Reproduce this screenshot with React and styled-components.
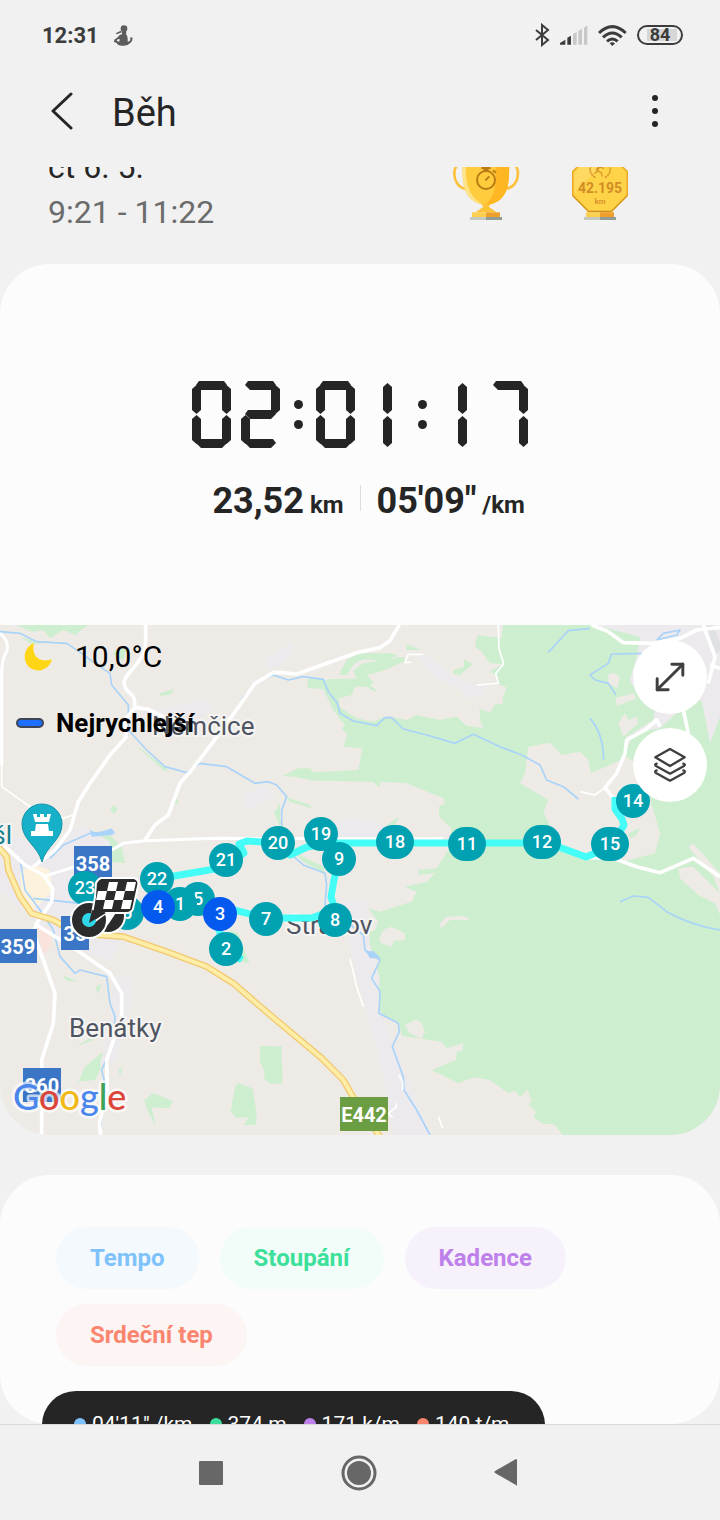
import React, { useState } from "react";
import styled, { createGlobalStyle } from "styled-components";
import { MoveDiagonal } from "lucide-react";

const colors = {
  background: "#f1f1f1",
  card: "#fcfcfc",
  text: "#252525",
  muted: "#6b6b6b",
  status: "#3c3c3c",
  nav: "#676767",
  blue: "#7fc2fb",
  green: "#3ce09a",
  purple: "#be80ea",
  coral: "#fb866f",
  pin: "#00a1b1",
  fastest: "#0459ee",
  route: "#43fdf6",
  land: "#eeebe6",
  forest: "#cdeecf",
  urban: "#edeaee",
  water: "#a9d3f8",
};

const GlobalStyle = createGlobalStyle`
  * {
    box-sizing: border-box;
  }

  body {
    margin: 0;
    background-color: ${colors.background};
    color: ${colors.text};
    font-family: Roboto, "Liberation Sans", sans-serif;
  }

  button {
    border: none;
    padding: 0;
    background: none;
    font-family: inherit;
    color: inherit;
    cursor: pointer;
  }

  svg {
    display: block;
  }
`;

const Screen = styled.div`
  display: flex;
  flex-direction: column;
  height: 100vh;
`;

const StatusBar = styled.div`
  display: flex;
  align-items: center;
  flex-shrink: 0;
  height: 70px;
  padding: 0 37px 0 42px;
  color: ${colors.status};

  .clock {
    font-size: 22px;
    font-weight: 700;
    margin-right: 15px;
  }

  .icons {
    display: flex;
    align-items: center;
    gap: 10px;
    margin-left: auto;
  }
`;

const Battery = styled.span`
  width: 46px;
  height: 20px;
  border: 2px solid ${colors.status};
  border-radius: 10px;
  font-size: 18px;
  line-height: 16px;
  font-weight: 700;
  text-align: center;
  background: linear-gradient(#d6d6d6, #d6d6d6) 8px 2px / 30px 12px no-repeat;
`;

const AppBar = styled.header`
  display: flex;
  align-items: center;
  flex-shrink: 0;
  height: 97px;
  padding: 0 45px 15px 42px;

  h1 {
    flex: 1;
    margin: 4px 0 0 30px;
    font-size: 38px;
    line-height: 44px;
    font-weight: 400;
  }
`;

const IconButton = styled.button`
  display: grid;
  place-items: center;
  width: 40px;
  height: 48px;
`;

const Content = styled.main`
  flex: 1;
  min-height: 0;
  overflow-y: auto;
  scrollbar-width: none;
`;

const Summary = styled.section`
  display: flex;
  justify-content: space-between;
  align-items: flex-start;
  margin-top: -22px;
  padding: 0 92px 29px 48px;
  font-size: 32px;
  line-height: 45px;

  p {
    margin: 0;
  }

  .time {
    color: ${colors.muted};
  }
`;

const Awards = styled.div`
  display: flex;
  gap: 50px;
`;

const Card = styled.section`
  background-color: ${colors.card};
  border-radius: ${(props) => (props.$top ? "50px 50px 0 0" : "50px")};
  padding: ${(props) => props.$padding};
`;

const Timer = styled.div`
  display: flex;
  justify-content: center;
`;

const Pair = styled.div`
  display: flex;
  gap: 10px;
`;

const Digit = styled.div`
  display: grid;
  width: 39px;
  height: 67px;
  padding-left: ${(props) => (props.$narrow ? "6px" : "0")};
`;

const Segment = styled.span`
  grid-area: 1 / 1;
  width: 9px;
  height: ${(props) => (props.$long ? "31px" : "29px")};
  margin: ${(props) => (props.$long ? "2px 0 1px" : "4px 0")};
  background-color: ${colors.text};
  justify-self: ${(props) => props.$x};
  align-self: ${(props) => props.$y};
  clip-path: polygon(
    50% 0,
    100% 4px,
    100% calc(100% - 4px),
    50% 100%,
    0 calc(100% - 4px),
    0 4px
  );

  &.flat {
    width: 31px;
    height: 9px;
    margin: 0;
    clip-path: polygon(
      3px 0,
      28px 0,
      100% 4px,
      26px 100%,
      5px 100%,
      0 4px
    );
  }
`;

const Colon = styled.div`
  display: flex;
  flex-direction: column;
  align-items: center;
  gap: 11px;
  width: 36px;
  padding-top: 19px;

  span {
    width: 9px;
    height: 9px;
    border-radius: 50%;
    background-color: ${colors.text};
  }
`;

const Stats = styled.div`
  display: grid;
  grid-template-columns: 1fr 1px 1fr;
  column-gap: 16px;
  align-items: center;
  margin-top: 32px;
  font-size: 36px;
  line-height: 42px;
  font-weight: 700;

  .distance {
    text-align: right;
  }

  .rule {
    height: 26px;
    margin-bottom: 6px;
    background-color: #dddddd;
  }

  small {
    font-size: 24px;
    line-height: 24px;
  }
`;

const MapPanel = styled.section`
  position: relative;
  overflow: hidden;
  border-radius: 0 0 50px 50px;
  background-color: ${colors.land};
  margin-bottom: 40px;

  svg.map {
    width: 100%;
    height: auto;
  }
`;

const MapInfo = styled.div`
  position: absolute;
  top: 12px;
  left: 16px;
  display: grid;
  row-gap: 30px;
  color: #000;

  .row {
    display: flex;
    align-items: center;
  }

  .weather {
    gap: 22px;
    padding-left: 8px;
    font-size: 30px;
    line-height: 40px;
  }

  .legend {
    gap: 12px;
    font-size: 26px;
    line-height: 32px;
    font-weight: 700;
  }

  .swatch {
    width: 28px;
    height: 10px;
    border: 2px solid #3d4656;
    border-radius: 5px;
    background-color: #1f6fff;
  }
`;

const MapTools = styled.div`
  position: absolute;
  top: 15px;
  right: 13px;
  display: grid;
  gap: 14px;
`;

const RoundButton = styled.button`
  display: grid;
  place-items: center;
  width: 74px;
  height: 74px;
  border-radius: 50%;
  background-color: #fff;
  color: #3f3f3f;
`;

const Chips = styled.div`
  display: flex;
  flex-wrap: wrap;
  gap: 15px 21px;
`;

const Chip = styled.button`
  height: 62px;
  padding: 0 34px;
  border-radius: 31px;
  font-size: 24px;
  font-weight: 700;
  color: ${(props) => props.$color};
  background-color: ${(props) => props.$fill};
`;

const Readout = styled.div`
  display: flex;
  gap: 17px;
  width: fit-content;
  margin: -33px 0 40px 42px;
  padding: 20px 35px 24px 32px;
  border-radius: 34px;
  background-color: ${colors.text};
  color: #fff;
  font-size: 21px;
  line-height: 26px;
  white-space: nowrap;
`;

const Reading = styled.span`
  display: flex;
  align-items: center;
  gap: 6px;

  &::before {
    content: "";
    width: 12px;
    height: 12px;
    border-radius: 50%;
    background-color: ${(props) => props.$color};
  }
`;

const NavBar = styled.nav`
  display: flex;
  justify-content: center;
  flex-shrink: 0;
  height: 96px;
  padding-right: 2px;
  border-top: 1px solid #d9d9d9;
  color: ${colors.nav};

  button {
    display: grid;
    place-items: center;
    width: 148px;
  }
`;

// which segments are lit, a = top and then clockwise, g = middle
const lit = {
  0: "abcdef",
  1: "bc",
  2: "abdeg",
  3: "abcdg",
  4: "bcfg",
  5: "acdfg",
  6: "acdefg",
  7: "abc",
  8: "abcdefg",
  9: "abcdfg",
};

const place = {
  a: ["center", "start"],
  b: ["end", "start"],
  c: ["end", "end"],
  d: ["center", "end"],
  e: ["start", "end"],
  f: ["start", "start"],
  g: ["center", "center"],
};

const SegmentDigit = ({ value }) => (
  <Digit $narrow={value === "1"}>
    {lit[value].split("").map((name) => (
      <Segment
        key={name}
        className={"adg".includes(name) ? "flat" : ""}
        $long={value === "1" || (value === "7" && name === "c")}
        $x={value === "1" ? "center" : place[name][0]}
        $y={place[name][1]}
      />
    ))}
  </Digit>
);

const SegmentTimer = ({ time }) => (
  <Timer role="timer" aria-label={time}>
    {time.split(":").map((pair, i) => (
      <React.Fragment key={i}>
        {i > 0 && (
          <Colon>
            <span />
            <span />
          </Colon>
        )}
        <Pair>
          <SegmentDigit value={pair[0]} />
          <SegmentDigit value={pair[1]} />
        </Pair>
      </React.Fragment>
    ))}
  </Timer>
);

const ActivityIcon = () => (
  <svg width="19" height="21" viewBox="342 70 57 63" fill="#5c5c5c">
    <circle cx="372" cy="81" r="10" />
    <path d="M347 95 L362 87 L366 92 L350 98Z" />
    <path
      fillRule="evenodd"
      d="M366 90 H379 L378 98 Q384 103 383 120 L388 119 Q393 116 390 108 L397 107 Q399 118 391 124 Q383 133 369 132 Q354 133 350 124 L342 121 L343 114 L353 107 Q360 97 366 98Z M353 113 L350 118 L358 120 L359 112Z"
    />
  </svg>
);

const BluetoothIcon = () => (
  <svg width="16" height="24" viewBox="0 0 16 24" fill="none" stroke="currentColor" strokeWidth="2">
    <path d="M2 7 L14 17 L8 22 V2 L14 7 L2 17" />
  </svg>
);

const SignalIcon = () => (
  <svg width="28" height="20" viewBox="0 0 84 60">
    <path d="M0 59 V54 L16 44 V59Z M22 59 V38 L33 32 V59Z" fill={colors.status} />
    <path
      d="M39 59 V27 L50 21 V59Z M55 59 V18 L66 11 V59Z M72 59 V8 L82 1 V59Z"
      fill="#c8c8c8"
    />
  </svg>
);

const WifiIcon = () => (
  <svg width="29" height="21" viewBox="0 0 87 63" fill="none" stroke="currentColor" strokeWidth="9">
    <path d="M3 24 Q43 -14 83 24 M15 37 Q43 11 71 37 M27 49 Q43 35 59 49" />
    <path d="M35 55 Q43 49 51 55 L43 63Z" fill="currentColor" stroke="none" />
  </svg>
);

const TrophyIcon = () => (
  <svg width="72" height="77" viewBox="270 435 216 231" role="img" aria-label="Pohár">
    <g fill="none" stroke="#fdc23c" strokeWidth="8">
      <path d="M310 492 C275 480 270 560 318 566" />
      <path d="M446 492 C483 480 486 560 438 566" />
    </g>
    <path d="M306 440 L308 525 Q309 602 368 614 H388 Q446 602 447 525 L450 440Z" fill="#ffcc3e" />
    <path d="M316 440 L318 525 Q322 590 368 612 Q309 602 308 525 L306 440Z" fill="#fee389" />
    <path d="M407 440 V545 Q403 596 374 614 H388 Q446 602 447 525 L450 440Z" fill="#feb722" />
    <path d="M364 613 H392 L386 620 L410 637 H346 L370 621Z" fill="#fbc437" />
    <path d="M336 637 H378 V651 H336Z" fill="#fbcf50" />
    <path d="M378 637 H420 V651 H378Z" fill="#ee9f2c" />
    <path d="M330 651 H378 V660 H330Z" fill="#c3c9be" />
    <path d="M378 651 H426 V660 H378Z" fill="#939c94" />
    <g fill="none" stroke="#b97c14" strokeWidth="6">
      <circle cx="378" cy="540" r="27" />
      <path d="M376 541 L388 529 M364 504 H392 M370 510 H386 M399 511 L408 518" />
    </g>
  </svg>
);

const MarathonIcon = () => (
  <svg width="56" height="77" viewBox="636 435 168 231" role="img" aria-label="Maraton 42.195 km">
    <path
      d="M688 465 H752 L802 515 V586 L754 635 H686 L638 586 V515Z"
      fill="#ffd348"
      stroke="#eda924"
      strokeWidth="5"
    />
    <path d="M690 470 H750 L643 577 V518Z" fill="#fff" opacity="0.14" />
    <path d="M638 588 L686 634 H754 L802 588" fill="none" stroke="#c98d18" strokeWidth="3" />
    <g fill="none" stroke="#d9962b" strokeWidth="5">
      <path d="M706 533 Q680 515 697 490 M735 533 Q761 515 744 490" strokeDasharray="7 2" />
      <path d="M722 496 L712 512 L724 518 L727 530 M708 510 L716 500 L732 505 M712 514 L703 520" strokeWidth="4" />
    </g>
    <text x="720" y="580" fontSize="42" fontWeight="700" fill="#d28d25" textAnchor="middle">
      42.195
    </text>
    <text x="720" y="612" fontSize="24" fontWeight="700" fill="#d9962b" textAnchor="middle">
      km
    </text>
    <path d="M678 637 H720 V651 H678Z" fill="#fbcf50" />
    <path d="M720 637 H762 V651 H720Z" fill="#ee9f2c" />
    <path d="M672 651 H720 V660 H672Z" fill="#c3c9be" />
    <path d="M720 651 H768 V660 H720Z" fill="#939c94" />
  </svg>
);

const MoonIcon = () => (
  <svg width="29" height="30" viewBox="0 0 29 30" fill="#ffd615">
    <path d="M10 1 C-2 6 -2 22 8 27 C17 31 26 26 28 17 C21 20 14 18 11 13 C9 9 9 5 10 1Z" />
  </svg>
);

const LayersIcon = () => (
  <svg
    width="34"
    height="36"
    viewBox="519 381 102 108"
    fill="none"
    stroke="currentColor"
    strokeWidth="7"
    strokeLinejoin="round"
    strokeLinecap="round"
  >
    <path d="M570 387 L614 412 L570 438 L526 412Z" />
    <path d="M530 431 Q522 434 528 438 L570 461 L612 438 Q618 434 610 431" />
    <path d="M530 451 Q522 454 528 459 L570 482 L612 459 Q618 454 610 451" />
  </svg>
);

// terrain is drawn in map tiles, three units to a pixel
const Terrain = () => (
  <g transform="scale(0.33333)">
    <g transform="translate(780 -15)" fill={colors.forest}>
      <path d="M728 15 L725 55 L652 45 L645 80 L665 95 L690 130 L730 132 L690 155 L712 168 L710 190 L740 203 L728 232 V253 H705 L690 278 L658 265 L662 310 L672 325 L620 318 L590 290 L540 300 L470 285 L440 300 L390 290 L370 292 L340 305 L290 295 L240 262 L235 235 L275 225 L285 200 L320 200 L345 215 L352 213 L330 195 L342 187 L320 165 L370 152 L438 122 L430 110 L310 130 L280 152 L290 176 L205 177 L192 185 L190 175 L143 178 V203 L190 208 L220 270 L255 318 L245 325 L262 345 L250 380 L306 385 L296 450 L162 457 L150 445 H115 L68 468 L100 470 L165 482 L340 485 L358 503 L362 485 L440 490 L550 535 L555 550 L537 560 V590 L575 625 L565 690 L530 745 L475 750 V765 L525 760 L500 785 L435 800 L470 815 L455 845 L360 875 L325 865 L355 905 L345 930 L315 940 L310 980 L330 1000 L360 1020 L340 1080 L358 1115 V1180 L418 1210 L425 1247 L545 1265 L560 1285 L608 1270 L610 1290 L590 1295 L588 1320 L515 1350 L595 1390 L640 1372 L690 1380 L745 1420 L763 1412 L780 1430 L803 1410 L815 1440 L807 1455 L828 1475 L820 1490 L850 1512 H882 L908 1545 H1380 V15Z" />
      <path d="M240 155 L262 118 L300 100 H395 L412 108 L370 122 L310 118 L285 130 L260 165 H240Z" />
      <path d="M440 72 L482 90 H438Z M580 150 L612 140 V118 L638 133 L600 165 L580 162Z" />
      <path d="M80 532 L150 555 L155 565 L90 545Z M60 555 L55 610 L75 620 L42 580Z M380 615 L418 590 L405 615Z M100 695 L190 740 L195 760 L130 725Z" />
      <path d="M0 1280 L10 1278 L67 1280 L58 1315 L67 1340 V1385 L30 1392 L12 1375 L15 1340 L0 1320Z" />
      <path d="M295 960 L305 1010 L290 985Z M345 1035 L310 1092 L325 1050Z" />
    </g>
    <g transform="translate(0 -15)" fill={colors.forest}>
      <path d="M50 15 H265 L225 45 L190 30 L150 55 L130 30 L95 35Z M60 50 L130 72 L90 70Z M340 95 L380 80 L370 120 L345 110Z" />
      <path d="M480 220 L520 208 L515 222 L482 228Z M405 375 L440 400 L510 455 L490 450Z M527 528 L537 550 L522 552Z M330 568 L342 555 L353 568 L342 583Z M822 580 L840 550 V620Z" />
      <path d="M270 655 L330 645 L365 680 L375 730 L320 725 L275 690Z" />
    </g>
    <g transform="translate(0 735)" fill={colors.forest}>
      <path d="M165 105 L205 100 L215 130 L180 125Z M120 40 L150 35 L145 70Z M185 315 L235 335 L200 332Z M285 350 L305 342 L295 372Z M358 385 L385 398 L358 405Z" />
      <path d="M235 635 L255 590 L315 540 L300 600 L285 630Z M228 530 L290 490 L280 510Z M355 600 L368 592 L360 618Z" />
      <path d="M433 690 L460 668 L520 695 L505 715 L455 712 L468 770 L440 715Z" />
      <path d="M705 650 L715 640 L758 655 L770 735 L768 765 H730 L748 740 L710 745 L692 725Z" />
      <path d="M795 528 L845 530 V640 L810 642 L780 575Z M690 180 L715 190 L748 280 L725 275Z" />
    </g>

    <g transform="translate(1440 -15)" fill={colors.land}>
      <path d="M145 380 L210 368 L245 405 L300 395 L325 420 L333 460 L400 430 L440 410 L480 440 L520 570 L540 640 L525 700 L440 722 L330 715 L240 680 L190 575 L205 540 L165 515 L120 490 L135 460Z" />
      <path d="M385 165 L400 158 L420 170 L412 205 L385 190Z M460 220 L405 235 L412 258 L470 235Z M415 310 L435 280 L445 300 L470 290 L475 310 L430 350Z" />
      <path d="M480 50 L340 15 H720 V290 L690 370 L665 240 L600 270 L540 325 L460 340 L430 410 L440 350 L520 300 L525 270 L470 220 L450 180 L470 110Z" fill={colors.urban} />
      <path d="M625 680 L640 670 L720 760 V820 L700 770Z M595 745 L640 740 L720 820 V885 L705 850 L655 825 L600 775Z" />
      <path d="M445 640 L480 625 L470 645 L450 655Z" fill={colors.forest} />
      <path d="M690 130 L720 200 V290 L665 240Z" fill={colors.urban} />
      <path d="M685 15 L720 95" stroke="#dfe1e4" strokeWidth="24" />
    </g>
    <g transform="translate(780 735)" fill={colors.land}>
      <path d="M358 205 L372 178 L395 170 L435 190 V210 L402 212 L395 232 L362 218Z M435 465 L470 448 L485 460 L495 485 L485 507 L450 490Z" />
      <path d="M540 160 L560 140 L610 138 L632 150 L570 150 L542 176Z" />
    </g>
    <g fill={colors.urban}>
      <path d="M800 100 L880 50 L875 90 L840 125 L800 130Z M1240 85 L1280 90 L1350 150 L1400 175 L1460 185 L1450 210 L1400 220 L1380 190 L1310 160Z" />
      <path d="M0 630 L60 640 L160 700 L190 640 L240 600 L330 650 L330 740 L400 800 L390 900 L330 1010 L200 960 L120 900 L0 800Z" />
      <path d="M340 1050 L400 1060 L390 1150 L350 1300 L300 1320 L330 1190Z M985 600 L1060 575 L1150 600 L1200 620 L1180 650 H1000Z" />
      <path d="M1020 830 L1100 830 L1110 960 L1140 1060 L1130 1130 L1200 1300 L1290 1530 H1180 L1150 1350 L1110 1200 L1060 1010Z" />
      <path d="M420 260 L480 250 L620 225 L640 250 L560 320 L480 310Z M735 510 L790 480 L830 510 L740 560Z" />
    </g>
    <path d="M60 740 L100 720 L150 735 L155 800 L100 855 L65 800Z" fill="#fdf3dc" />
    <path d="M112 910 L145 905 L155 960 L130 990Z" fill="#fae3dc" />

    <g fill="none" stroke={colors.water} strokeWidth="5" strokeLinejoin="round">
      <path d="M0 20 L60 25 L110 50 L200 55 L245 85 L285 115 L330 145 L335 180 L385 240 V315 L440 375 L495 425 L560 443 L600 415 L680 425 L765 475 L805 470 L830 480 L860 515 L845 555 V605" />
      <path d="M725 225 L770 170 L820 150 L865 165 L910 155 L970 163 L985 200 L1012 235 L1020 265 L1060 288 L1130 302 L1155 278 H1175 L1210 312 L1280 330 L1365 355 L1420 328 L1500 365 L1565 390 L1620 420 L1640 465 L1690 485 L1735 522" />
      <path d="M150 700 L190 660 L270 625 L340 620 M60 700 L75 795 L120 855 L160 915 L180 995 L225 1045 L240 1035 L320 1055 L330 1135 L345 1175 L340 1255 L305 1335 L315 1375 L300 1525 M100 820 L240 835" />
      <path d="M870 685 L910 720 L975 745 L980 780 L975 840 L1090 930 L1095 975 L1140 1005 L1115 1060 L1140 1100 L1137 1165 L1195 1195 L1198 1220 L1177 1265 L1210 1355 L1212 1395 L1250 1455 L1290 1530" />
      <path d="M1645 82 L1705 17 L1770 10 M1940 85 L1835 87 L1825 115 L1770 150 L1785 165 L1825 175 L1848 210 M1770 280 Q1810 325 1811 405 M1860 830 L1900 813 L1945 817 L2000 860 Q2070 900 2160 915 M1970 45 L1990 25 L2040 15 L2030 30 L1970 45" />
    </g>
    <g fill={colors.water}>
      <path d="M270 615 L290 625 L335 610 L345 625 L335 630 L275 635Z M1098 980 L1120 978 L1142 1000 L1110 1000Z" />
    </g>

    <g fill="none" stroke="#fff" strokeWidth="11" strokeLinejoin="round">
      <path d="M437 0 V45 C437 115 370 145 372 175 C375 205 400 200 403 225 L405 247 L375 285 L378 337 L330 390 L270 475 L235 530 L210 615 L165 675 L100 725" />
      <path d="M405 247 L445 253 L520 290" />
      <path d="M1198 0 L1170 47 L1140 68 L1070 83 L890 147 L840 142 L820 143 L765 175 L720 240 L640 350 L575 435 L540 475 L505 570 L465 600 L435 645" />
      <path d="M0 25 Q30 50 20 80 Q5 100 5 150 V420 M130 755 L225 725 L335 675 L370 655 L435 647 L650 640 L1300 641 L1330 640" strokeWidth="9" />
      <path d="M0 650 L75 720 L130 750 L158 790 L155 830 L110 895 L100 925 L130 1005 L165 1105 L160 1195 L125 1305 V1530 M110 900 L230 975 L330 1045 L365 1105 V1175 L320 1305 L322 1395 L298 1495 L302 1530" />
      <path d="M1775 0 L1825 20 L1870 53 L1960 55 L2040 40 L2090 15 L2160 7 M2110 0 L2145 95 L2125 175 M2130 120 L2160 130 M2050 255 L2065 325" />
      <path d="M1980 305 L1970 285 L1935 315 L1880 345 L1875 385 L1850 445 L1815 488 L1840 520 M1750 697 L1840 700 L1910 725 L1980 743 L2080 700 L2160 755" />
    </g>
    <g fill="none" stroke="#fff" strokeWidth="5">
      <path d="M1495 0 L1497 70 L1511 117 L1487 145 L1495 175 L1430 180 M1215 110 L1225 88 H1270 M1213 112 H1235 M5 420 L5 485 L90 545 L190 580 L220 570" />
      <path d="M1050 1000 L1070 1085 L1090 1145 M1195 1350 L1208 1370 V1395 M1188 1435 L1190 1445 L1165 1465 L1178 1478 M1315 1475 L1328 1510 M1740 500 L1785 510 L1815 488" />
    </g>
    <g fill="none" strokeLinejoin="round">
      <path d="M-10 660 L20 695 L25 735 L60 815 L95 865 L160 885 L230 925 L370 935 L500 980 L620 1025 L700 1075 L840 1195 L960 1295 L1030 1365 L1070 1435 L1140 1535" stroke="#f1ca72" strokeWidth="20" />
      <path d="M-10 660 L20 695 L25 735 L60 815 L95 865 L160 885 L230 925 L370 935 L500 980 L620 1025 L700 1075 L840 1195 L960 1295 L1030 1365 L1070 1435 L1140 1535" stroke="#fdeda6" strokeWidth="12" />
    </g>
  </g>
);

const Place = styled.text`
  font-size: 26px;
  fill: ${(props) => props.$color || "#4e5561"};
  stroke: #f6f4f3;
  stroke-width: 4px;
  stroke-linejoin: round;
  paint-order: stroke;
`;

const Brand = styled.text`
  font-family: Lato, sans-serif;
  font-size: 36px;
  font-weight: 500;
  stroke: rgba(255, 255, 255, 0.7);
  stroke-width: 5px;
  stroke-linejoin: round;
  paint-order: stroke;
`;

const RoadSign = ({ x, y, width = 38, fill = "#3b76c6", children }) => (
  <g>
    <rect x={x} y={y} width={width} height="34" fill={fill} />
    <text
      x={x + width / 2}
      y={y + 25}
      fontSize="20"
      fontWeight="700"
      fill="#fff"
      textAnchor="middle"
    >
      {children}
    </text>
  </g>
);

const pins = [
  { km: 23, x: 85, y: 263 },
  { km: 22, x: 157, y: 254 },
  { km: 21, x: 226, y: 235 },
  { km: 20, x: 278, y: 218 },
  { km: 19, x: 321, y: 209 },
  { km: 18, x: 395, y: 217, wide: 2 },
  { km: 11, x: 467, y: 219, wide: 2 },
  { km: 12, x: 542, y: 217, wide: 2 },
  { km: 14, x: 633, y: 176 },
  { km: 15, x: 610, y: 219, wide: 2 },
  { km: 9, x: 339, y: 234 },
  { km: 8, x: 335, y: 295 },
  { km: 7, x: 266, y: 294 },
  { km: 6, x: 127, y: 288 },
  { km: 5, x: 198, y: 274 },
  { km: 1, x: 180, y: 279 },
  { km: 2, x: 226, y: 324 },
  { km: 4, x: 158, y: 282, fastest: true },
  { km: 3, x: 220, y: 289, fastest: true },
];

const Pin = ({ km, x, y, wide = 0, fastest }) => (
  <g>
    <rect
      x={x - 17 - wide}
      y={y - 17}
      width={34 + wide * 2}
      height="34"
      rx="17"
      fill={fastest ? colors.fastest : colors.pin}
    />
    <text x={x} y={y + 6} fontSize="18" fontWeight="500" fill="#fff" textAnchor="middle">
      {km}
    </text>
  </g>
);

const RouteMap = () => (
  <svg className="map" viewBox="0 0 720 510">
    <Terrain />

    <Place x="152" y="110">Němčice</Place>
    <Place x="286" y="309">Stražov</Place>
    <Place x="69" y="412">Benátky</Place>
    <Place x="12" y="219" textAnchor="end" $color="#17808e">šl</Place>

    <g transform="translate(42 199)">
      <path d="M0 38 C-4 22 -20 16 -20 0 A20 20 0 0 1 20 0 C20 16 4 22 0 38Z" fill="#16b0c8" stroke="#1295ab" />
      <path d="M-9 -10 H-5 V-7 H-2 V-10 H2 V-7 H5 V-10 H9 L7 -2 H-7Z M-6 0 H6 L7 7 H11 V12 H-11 V7 H-7Z" fill="#fff" />
    </g>

    <RoadSign x={74} y={221}>358</RoadSign>
    <RoadSign x={-1} y={304}>359</RoadSign>
    <RoadSign x={61} y={291} width={28}>35</RoadSign>
    <RoadSign x={23} y={443}>360</RoadSign>
    <RoadSign x={340} y={472} width={48} fill="#6b9e42">E442</RoadSign>

    <g fill="none" stroke={colors.route} strokeWidth="7" strokeLinejoin="round">
      <path d="M157 254 L226 242 L244 228 L239 219 L247 216 L278 218 L290 230 L307 222 L330 218 L548 218 L586 232 L610 222 L624 200 L622 194 L615 184 V172" />
      <path d="M339 234 L334 255 L331 272 L335 284 L312 293 H266 L230 284 L198 274 L127 288 M217 300 L226 324 L242 335" />
    </g>

    {pins.map((pin) => (
      <Pin key={pin.km} {...pin} />
    ))}

    <g stroke="#fff" strokeWidth="2">
      <circle cx="108" cy="291" r="17" fill="#2b2b2b" />
      <path d="M106 286 L114 289 L108 298Z" fill="#fff" />
      <circle cx="89" cy="295" r="18" fill="#2b2b2b" />
      <path
        d="M101 253 H134 Q140 255 138 261 L133 284 Q131 288 127 288 H106 L90 300 L95 272 L96 258 Q98 254 101 253Z"
        fill="#2b2b2b"
      />
    </g>
    <circle cx="89" cy="295" r="7" fill="#2fd6e8" />
    <path d="M89 298 L92 285 L106 288Z" fill="#2b2b2b" />
    <path
      d="M109 257 h9 l-2 9 h-9z M127 257 h9 l-2 9 h-9z M98 266 h9 l-2 9 h-9z M116 266 h9 l-2 9 h-9z M105 275 h9 l-2 9 h-9z M123 275 h9 l-2 9 h-9z"
      fill="#fff"
    />

    <Brand x="13" y="485">
      <tspan fill="#4a86ec">G</tspan>
      <tspan fill="#dc4639">o</tspan>
      <tspan fill="#f2b916">o</tspan>
      <tspan fill="#4a86ec">g</tspan>
      <tspan fill="#3da35a">l</tspan>
      <tspan fill="#dc4639">e</tspan>
    </Brand>
  </svg>
);

const series = [
  { name: "Tempo", value: "04'11\" /km", color: colors.blue, fill: "#f4f9fd" },
  { name: "Stoupání", value: "374 m", color: colors.green, fill: "#f2fdf9" },
  { name: "Kadence", value: "171 k/m", color: colors.purple, fill: "#f6f1fb" },
  { name: "Srdeční tep", value: "140 t/m", color: colors.coral, fill: "#fdf4f4" },
];

export default function App() {
  const [hidden, setHidden] = useState([]);

  const toggle = (name) => {
    setHidden(
      hidden.includes(name)
        ? hidden.filter((item) => item !== name)
        : [...hidden, name]
    );
  };

  return (
    <Screen>
      <GlobalStyle />
      <StatusBar>
        <span className="clock">12:31</span>
        <ActivityIcon />
        <div className="icons">
          <BluetoothIcon />
          <SignalIcon />
          <WifiIcon />
          <Battery>84</Battery>
        </div>
      </StatusBar>

      <AppBar>
        <IconButton aria-label="Zpět">
          <svg width="24" height="38" viewBox="0 0 24 38" fill="none" stroke="currentColor" strokeWidth="3" strokeLinecap="round" strokeLinejoin="round">
            <path d="M21 2 L3 19 L21 36" />
          </svg>
        </IconButton>
        <h1>Běh</h1>
        <IconButton aria-label="Další možnosti">
          <svg width="8" height="34" viewBox="0 0 8 34" fill="currentColor">
            <circle cx="4" cy="4" r="3" />
            <circle cx="4" cy="17" r="3" />
            <circle cx="4" cy="30" r="3" />
          </svg>
        </IconButton>
      </AppBar>

      <Content>
        <Summary>
          <div>
            <p>čt 6. 5.</p>
            <p className="time">9:21 - 11:22</p>
          </div>
          <Awards>
            <TrophyIcon />
            <MarathonIcon />
          </Awards>
        </Summary>

        <Card $top $padding="117px 0 103px">
          <SegmentTimer time="02:01:17" />
          <Stats>
            <span className="distance">
              23,52<small> km</small>
            </span>
            <span className="rule" />
            <span>
              05'09"<small> /km</small>
            </span>
          </Stats>
        </Card>

        <MapPanel>
          <RouteMap />
          <MapInfo>
            <div className="row weather">
              <MoonIcon />
              <span>10,0°C</span>
            </div>
            <div className="row legend">
              <span className="swatch" />
              <span>Nejrychlejší</span>
            </div>
          </MapInfo>
          <MapTools>
            <RoundButton aria-label="Zvětšit mapu">
              <MoveDiagonal size={44} strokeWidth={1.6} />
            </RoundButton>
            <RoundButton aria-label="Typ mapy">
              <LayersIcon />
            </RoundButton>
          </MapTools>
        </MapPanel>

        <Card $padding="52px 56px 58px">
          <Chips>
            {series.map((item) => (
              <Chip
                key={item.name}
                $color={item.color}
                $fill={item.fill}
                onClick={() => toggle(item.name)}
              >
                {item.name}
              </Chip>
            ))}
          </Chips>
        </Card>
        <Readout>
          {series
            .filter((item) => !hidden.includes(item.name))
            .map((item) => (
              <Reading key={item.name} $color={item.color}>
                {item.value}
              </Reading>
            ))}
        </Readout>
      </Content>

      <NavBar>
        <button aria-label="Poslední aplikace">
          <svg width="24" height="24" viewBox="0 0 24 24" fill="currentColor">
            <rect width="24" height="24" rx="1" />
          </svg>
        </button>
        <button aria-label="Domů">
          <svg width="36" height="36" viewBox="0 0 36 36" fill="none" stroke="currentColor">
            <circle cx="18" cy="18" r="16" strokeWidth="3" />
            <circle cx="18" cy="18" r="12" fill="currentColor" stroke="none" />
          </svg>
        </button>
        <button aria-label="Zpět">
          <svg width="27" height="27" viewBox="0 0 27 27" fill="currentColor">
            <path d="M1 14 Q0 13 1 12 L22 0 Q23 0 23 1 V26 Q23 27 22 26Z" />
          </svg>
        </button>
      </NavBar>
    </Screen>
  );
}
